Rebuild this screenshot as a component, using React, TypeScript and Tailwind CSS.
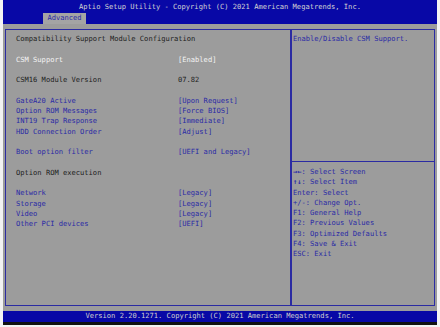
const mono = { fontFamily: '"DejaVu Sans Mono", "Liberation Mono", monospace' };

type Row = { label?: string; value?: string; kind?: 'title' | 'sel' | 'item' | 'blank' };

const rows: Row[] = [
  { label: 'Compatibility Support Module Configuration', kind: 'title' },
  { kind: 'blank' },
  { label: 'CSM Support', value: '[Enabled]', kind: 'sel' },
  { kind: 'blank' },
  { label: 'CSM16 Module Version', value: '07.82', kind: 'title' },
  { kind: 'blank' },
  { label: 'GateA20 Active', value: '[Upon Request]', kind: 'item' },
  { label: 'Option ROM Messages', value: '[Force BIOS]', kind: 'item' },
  { label: 'INT19 Trap Response', value: '[Immediate]', kind: 'item' },
  { label: 'HDD Connection Order', value: '[Adjust]', kind: 'item' },
  { kind: 'blank' },
  { label: 'Boot option filter', value: '[UEFI and Legacy]', kind: 'item' },
  { kind: 'blank' },
  { label: 'Option ROM execution', kind: 'title' },
  { kind: 'blank' },
  { label: 'Network', value: '[Legacy]', kind: 'item' },
  { label: 'Storage', value: '[Legacy]', kind: 'item' },
  { label: 'Video', value: '[Legacy]', kind: 'item' },
  { label: 'Other PCI devices', value: '[UEFI]', kind: 'item' },
];

// key help lines, first part may be an arrow pair drawn bold
const keys: { k: string; t: string; bold?: boolean }[] = [
  { k: '→←', t: ': Select Screen', bold: true },
  { k: '↑↓', t: ': Select Item', bold: true },
  { k: 'Enter', t: ': Select' },
  { k: '+/-', t: ': Change Opt.' },
  { k: 'F1', t: ': General Help' },
  { k: 'F2', t: ': Previous Values' },
  { k: 'F3', t: ': Optimized Defaults' },
  { k: 'F4', t: ': Save & Exit' },
  { k: 'ESC', t: ': Exit' },
];

function colorFor(kind?: Row['kind']) {
  if (kind === 'sel') return 'text-[#f4f4f4]';
  if (kind === 'title') return 'text-[#1c1c1c]';
  return 'text-[#2a2aa6]';
}

export default function App() {
  return (
    <div className="w-[440px] h-[327px] bg-[#f3f3f3] px-[3px] pb-[2px]" style={mono}>
      <div className="flex flex-col h-[325px] text-[7.1px] leading-[10.3px] whitespace-pre">
        {/* Title bar with tab */}
        <div className="h-[24px] bg-[#0808a6] flex flex-col">
          <div className="h-[13px] flex items-center justify-center text-[#d4d4d4] pt-[2px]">
            Aptio Setup Utility - Copyright (C) 2021 American Megatrends, Inc.
          </div>
          <div className="flex-1 flex pl-[40px]">
            <div className="w-[43px] bg-[#a4a4a4] text-[#2a2aa6] flex items-center justify-center">
              Advanced
            </div>
          </div>
        </div>

        {/* Main area */}
        <div className="flex-1 bg-[#9c9c9c] pt-[5px] pb-[5px] px-[2px]">
          <div className="flex h-full">
            <div className="w-[286px] h-full border border-[#2b2ba2] pt-[4px] pl-[10px]">
              {rows.map((r, i) => (
                <div key={i} className={`flex h-[10.3px] ${colorFor(r.kind)}`}>
                  <div className="w-[162px]">{r.label ?? ''}</div>
                  <div>{r.value ?? ''}</div>
                </div>
              ))}
            </div>
            <div className="flex-1 h-full border border-[#2b2ba2] flex flex-col text-[#2a2aa6]">
              <div className="h-[132px] border-b border-[#2b2ba2] pt-[4px] pl-[1px]">
                Enable/Disable CSM Support.
              </div>
              <div className="pt-[5px] pl-[1px]">
                {keys.map((x) => (
                  <div key={x.k} className="h-[10.3px]">
                    <span className={x.bold ? 'font-bold' : ''}>{x.k}</span>
                    {x.t}
                  </div>
                ))}
              </div>
            </div>
          </div>
        </div>

        {/* Bottom bar */}
        <div className="h-[11px] bg-[#0808a6] text-[#cfcfcf] flex items-center justify-center">
          Version 2.20.1271. Copyright (C) 2021 American Megatrends, Inc.
        </div>
        <div className="h-[3px] bg-[#111111]" />
      </div>
    </div>
  );
}
